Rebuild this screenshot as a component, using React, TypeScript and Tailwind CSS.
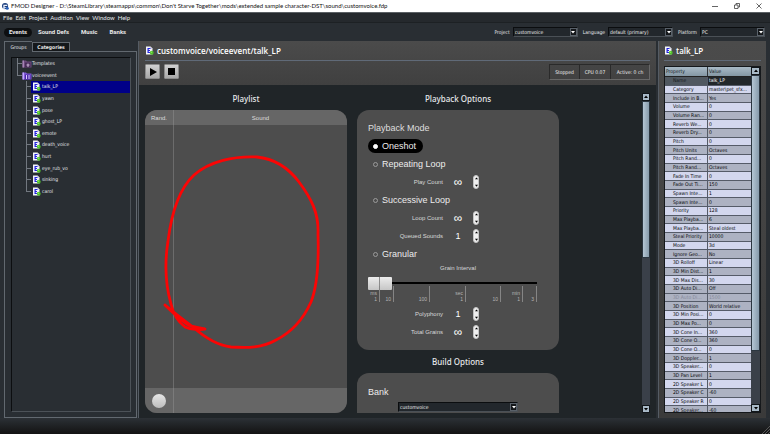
import React, { useState } from 'react';
import clsx from 'clsx';

const MENUS = ['File', 'Edit', 'Project', 'Audition', 'View', 'Window', 'Help'];

const EVENTS = ['talk_LP', 'yawn', 'pose', 'ghost_LP', 'emote', 'death_voice', 'hurt', 'eye_rub_vo', 'sinking', 'carol'];

const PROPERTIES: [string, string][] = [
  ['Name', 'talk_LP'],
  ['Category', 'master\\pet_sfx...'],
  ['Include in B...', 'Yes'],
  ['Volume', '0'],
  ['Volume Ran...', '0'],
  ['Reverb We...', '0'],
  ['Reverb Dry...', '0'],
  ['Pitch', '0'],
  ['Pitch Units', 'Octaves'],
  ['Pitch Rand...', '0'],
  ['Pitch Rand...', 'Octaves'],
  ['Fade In Time', '0'],
  ['Fade Out Ti...', '150'],
  ['Spawn Inte...', '1'],
  ['Spawn Inte...', '0'],
  ['Priority', '128'],
  ['Max Playba...', '6'],
  ['Max Playba...', 'Steal oldest'],
  ['Steal Priority', '10000'],
  ['Mode', '3d'],
  ['Ignore Geo...', 'No'],
  ['3D Rolloff', 'Linear'],
  ['3D Min Dist...', '1'],
  ['3D Max Dis...', '30'],
  ['3D Auto Di...', 'Off'],
  ['3D Auto Di...', '1500'],
  ['3D Position', 'World relative'],
  ['3D Min Posi...', '0'],
  ['3D Max Po...', '0'],
  ['3D Cone In...', '360'],
  ['3D Cone O...', '360'],
  ['3D Cone O...', '0'],
  ['3D Doppler...', '1'],
  ['3D Speaker...', '0'],
  ['3D Pan Level', '1'],
  ['2D Speaker L', '0'],
  ['2D Speaker C', '-60'],
  ['2D Speaker R', '0'],
  ['2D Speaker...', '-60'],
];

const DISABLED_ROW = 25;

const TICKS = [
  { unit: 'ms', label: '1', width: 'w-[12px]' },
  { unit: '', label: '10', width: 'w-[14px]' },
  { unit: '', label: '100', width: 'w-[36px]' },
  { unit: 'sec', label: '1', width: 'w-[36px]' },
  { unit: '', label: '10', width: 'w-[35px]' },
  { unit: 'min', label: '1', width: 'w-[22px]' },
  { unit: '', label: '3', width: 'w-[14px]' },
];

const EventIcon: React.FC = () => (
  <svg viewBox="0 0 18 18" className="h-[9px] w-[9px] shrink-0" aria-hidden="true">
    <path d="M2 1h9l4 4v12H2z" fill="#f4f5fb" />
    <path d="M11 1v4h4z" fill="#b9bccd" />
    <path d="M5 4h6v2H7.400v2H10v2H7.400v2H11v2H5z" fill="#2222e0" />
    <circle cx="13.500" cy="13.500" r="3.800" fill="#4fc02a" />
    <circle cx="12.800" cy="12.600" r="1.600" fill="#8be85c" />
  </svg>
);

const FolderIcon: React.FC<{ open?: boolean }> = ({ open }) => (
  <svg viewBox="0 0 20 18" className="h-[9px] w-[10px] shrink-0" aria-hidden="true">
    <path d="M1 3h7l2 2h9v12H1z" fill={open ? '#8058d8' : '#6d4a7c'} />
    <path d="M1 3h3v14H1z" fill={open ? '#c3a8ff' : '#a583b4'} />
    <path d="M6 7h11v10H6z" fill={open ? '#4b27a8' : '#482c58'} />
    {open ? (
      <path d="M8 8h2v8H8zM12 8h1v8h-1zM15 8h1v8h-1z" fill="#d8c8ff" />
    ) : (
      <path d="M11 9h2v2h2v2h-2v3h-2v-3H9v-2h2z" fill="#c9b2d4" />
    )}
  </svg>
);

const Arrow: React.FC<{ up?: boolean; small?: boolean }> = ({ up, small }) => (
  <svg viewBox="0 0 8 8" className={small ? 'h-[3px] w-[3px]' : 'h-[4px] w-[4px]'} aria-hidden="true">
    <path d={up ? 'M0 6h8L4 1z' : 'M0 2h8L4 7z'} fill="currentColor" />
  </svg>
);

const Dropdown: React.FC<{ label: string; value: string; hideLabel?: boolean; className?: string }> = ({
  label,
  value,
  hideLabel,
  className,
}) => (
  <label className="flex items-center gap-[3px]">
    {!hideLabel && <span>{label}</span>}
    <span className={clsx('relative flex h-[10px] border border-[#0b0d0f] border-r-[#4a5056] border-b-[#4a5056] bg-[#22272c]', className)}>
      <select aria-label={label} className="w-full appearance-none bg-transparent pl-px text-[5px] leading-[8px] text-[#f0f0f0] outline-none">
        <option>{value}</option>
      </select>
      <span className="pointer-events-none absolute top-0 right-0 flex h-[8px] w-[7px] items-center justify-center border border-[#59616a] bg-[#14171a] text-white">
        <Arrow />
      </span>
    </span>
  </label>
);

const ScrollBar: React.FC<{ className: string; thumb: string }> = ({ className, thumb }) => (
  <div className={clsx('flex shrink-0 flex-col bg-[#3a4049]', className)}>
    <button aria-label="Scroll up" className="flex h-[8px] shrink-0 items-center justify-center border border-[#12161a] bg-[#a9bac8] text-black">
      <Arrow up />
    </button>
    <div className={clsx('border border-[#2b3640] bg-linear-to-r from-[#b4c6d4] to-[#879bab]', thumb)} />
    <button aria-label="Scroll down" className="mt-auto flex h-[8px] shrink-0 items-center justify-center border border-[#12161a] bg-[#a9bac8] text-black">
      <Arrow />
    </button>
  </div>
);

const TitleBar: React.FC = () => (
  <header className="flex h-[12px] shrink-0 items-center bg-white pr-2 pl-[2px] text-[#111]">
    <svg viewBox="0 0 16 16" className="mr-[2px] h-[7px] w-[7px]" aria-hidden="true">
      <circle cx="7" cy="7" r="7" fill="#1c3f7c" />
      <path d="M3 4h9v3H6v2h5v2H6v4H3z" fill="#e8eefc" />
      <circle cx="12" cy="12" r="3.500" fill="#2760b8" />
    </svg>
    <h1 className="font-['Lato','Noto_Sans',sans-serif] text-[6px] leading-none whitespace-nowrap">
      FMOD Designer - D:\SteamLibrary\steamapps\common\Don't Starve Together\mods\extended sample character-DST\sound\customvoice.fdp
    </h1>
    <div className="ml-auto flex items-center gap-4">
      <button aria-label="Minimize">
        <svg viewBox="0 0 12 12" className="h-[6px] w-[6px]" fill="none" stroke="#333" strokeWidth="1.500">
          <path d="M0 7h12" />
        </svg>
      </button>
      <button aria-label="Restore">
        <svg viewBox="0 0 12 12" className="h-[6px] w-[6px]" fill="none" stroke="#333" strokeWidth="1.500">
          <path d="M1 4h7v7H1zM4 4V1h7v7H8" />
        </svg>
      </button>
      <button aria-label="Close">
        <svg viewBox="0 0 12 12" className="h-[6px] w-[6px]" fill="none" stroke="#333" strokeWidth="1.500">
          <path d="M1 1l10 10M11 1L1 11" />
        </svg>
      </button>
    </div>
  </header>
);

// Connector lines in front of a tree item
const Branch: React.FC<{ last?: boolean }> = ({ last }) => (
  <span className="flex w-[5px] shrink-0 flex-col self-stretch">
    <span className="flex-1 border-b border-l border-[#727880]" />
    <span className={clsx('flex-1', !last && 'border-l border-[#727880]')} />
  </span>
);

const GroupTree: React.FC<{ selected: string; onSelect: (name: string) => void }> = ({ selected, onSelect }) => (
  <ul className="grid h-[139px] auto-rows-fr leading-none text-[#e4e6ea]">
    <li className="flex items-center pl-[5px]">
      <Branch />
      <FolderIcon />
      <span>Templates</span>
    </li>
    <li className="flex items-center pl-[5px]">
      <Branch last />
      <FolderIcon open />
      <span>voiceevent</span>
    </li>
    {EVENTS.map((name, i) => (
      <li key={name} className="flex items-center pl-[14px]">
        <Branch last={i === EVENTS.length - 1} />
        <button
          onClick={() => onSelect(name)}
          className={clsx('flex flex-1 items-center gap-px self-stretch pl-px', name === selected && 'bg-[#000088]')}
        >
          <EventIcon />
          <span>{name}</span>
        </button>
      </li>
    ))}
  </ul>
);

const Sidebar: React.FC = () => {
  const [selected, setSelected] = useState('talk_LP');

  return (
    <aside className="mr-px flex w-[133px] shrink-0 flex-col">
      <div className="flex items-end leading-none">
        <button className="h-[11px] w-[28px] border-t border-l border-[#626970] text-[#e4e6ea]">Groups</button>
        <button className="h-[10px] w-[38px] border border-[#626970] bg-[#15181b] font-bold text-[#e4e4e4]">Categories</button>
        <span className="flex-1 border-b border-[#626970]" />
      </div>
      <div className="flex min-h-0 flex-1 border-r border-b border-l border-[#626970] pt-[5px] pr-[5px] pb-[5px] pl-[6px]">
        <div className="flex-1 overflow-hidden border border-[#0c0e10] border-r-[#4c5258] border-b-[#4c5258]">
          <GroupTree selected={selected} onSelect={setSelected} />
        </div>
      </div>
    </aside>
  );
};

const PanelTitle: React.FC<{ children: React.ReactNode }> = ({ children }) => (
  <h2 className="flex h-[20px] items-center gap-[3px] border-b border-[#606a78] font-['Open_Sans','Noto_Sans',sans-serif] text-[8px] font-semibold text-white">
    <EventIcon />
    {children}
  </h2>
);

const Playlist: React.FC = () => (
  <section className="flex w-[202px] shrink-0 flex-col">
    <h3 className="flex h-[25px] items-center justify-center pt-[2px] font-['Noto_Sans',sans-serif] text-[8px] font-medium text-[#e6e8ea]">Playlist</h3>
    <div className="relative flex flex-1 flex-col overflow-hidden rounded-[12px] bg-[#4d4d4d] font-['Liberation_Sans',Arial,sans-serif] text-[6px] text-[#dcdcdc]">
      <div className="flex h-[15px] bg-[#666]">
        <span className="flex w-[29px] items-center justify-center border-r border-[#7b7b7b]">Rand.</span>
        <span className="flex flex-1 items-center justify-center">Sound</span>
      </div>
      <div className="w-[29px] flex-1 border-r border-[#6c6c6c]" />
      <div className="flex h-[25px] bg-[#666]">
        <span className="flex w-[29px] items-center justify-center border-r border-[#7b7b7b]">
          <button aria-label="Play mode" className="h-[14px] w-[14px] rounded-full bg-linear-to-b from-[#e6e6e6] to-[#bdbdbd]" />
        </span>
      </div>
      <svg viewBox="0 0 202 303" className="pointer-events-none absolute inset-0 h-full w-full" fill="none" stroke="#fb0505" strokeWidth="2.800" strokeLinecap="round" strokeLinejoin="round">
        <path d="M20 195C26 201 34 209 42 214C48 218 54 217 60 219C54 220 46 220 40 217C32 211 28 203 26 194C20 173 20 150 23 131C27 99 36 77 49 65C65 51 89 46 112 47C132 49 145 60 154 72C166 88 174 103 173 124C174 156 172 177 166 192C157 212 143 224 131 230C117 238 103 238 86 237C70 235 58 226 48 217C40 211 32 205 20 195" />
      </svg>
    </div>
  </section>
);

type Mode = 'Oneshot' | 'Repeating Loop' | 'Successive Loop' | 'Granular';

const ModeOption: React.FC<{ mode: Mode; current: Mode; onChange: (mode: Mode) => void }> = ({ mode, current, onChange }) => (
  <div className="flex h-[18px] items-center">
    <label className={clsx('flex h-[14px] items-center gap-1 rounded-full pr-[7px] pl-[5px] text-[9px] leading-none text-[#ececec]', mode === current && 'bg-black')}>
      <input
        type="radio"
        name="playback-mode"
        checked={mode === current}
        onChange={() => onChange(mode)}
        className="h-[5px] w-[5px] appearance-none rounded-full border border-[#9a9a9a] checked:border-white checked:bg-white"
      />
      {mode}
    </label>
  </div>
);

const CountRow: React.FC<{ label: string; value: string }> = ({ label, value }) => (
  <div className="flex h-[18px] items-center">
    <span className="w-[75px] text-right text-[6px] text-[#d8d8d8]">{label}</span>
    <output className={clsx('w-[30px] text-center leading-none text-white', value === '1' ? 'text-[9px]' : 'text-[12px]')}>{value}</output>
    <span className="flex h-[14px] w-[6px] flex-col items-center justify-between rounded-full border border-[#c4c4c4] bg-[#efefef] py-px text-black">
      <button aria-label={`Increase ${label}`} className="flex"><Arrow up small /></button>
      <button aria-label={`Decrease ${label}`} className="flex"><Arrow small /></button>
    </span>
  </div>
);

const PlaybackOptions: React.FC = () => {
  const [mode, setMode] = useState<Mode>('Oneshot');

  return (
    <section>
      <h3 className="flex h-[25px] items-center justify-center pt-[2px] font-['Noto_Sans',sans-serif] text-[8px] font-medium text-[#e6e8ea]">Playback Options</h3>
      <div className="rounded-[12px] bg-[#4d4d4d] px-[11px] pt-[10px] pb-[9px] font-['Liberation_Sans',Arial,sans-serif]">
        <h4 className="flex h-[17px] items-center text-[9px] text-[#dedede]">Playback Mode</h4>
        <ModeOption mode="Oneshot" current={mode} onChange={setMode} />
        <ModeOption mode="Repeating Loop" current={mode} onChange={setMode} />
        <CountRow label="Play Count" value="∞" />
        <ModeOption mode="Successive Loop" current={mode} onChange={setMode} />
        <CountRow label="Loop Count" value="∞" />
        <CountRow label="Queued Sounds" value="1" />
        <ModeOption mode="Granular" current={mode} onChange={setMode} />
        <label className="block">
          <span className="block h-[13px] text-center text-[6px] leading-[10px] text-[#d8d8d8]">Grain Interval</span>
          <input
            type="range"
            defaultValue={0}
            className="block h-[13px] w-[169px] appearance-none bg-transparent [&::-webkit-slider-runnable-track]:h-[2px] [&::-webkit-slider-runnable-track]:bg-black [&::-webkit-slider-thumb]:-mt-[5px] [&::-webkit-slider-thumb]:h-[13px] [&::-webkit-slider-thumb]:w-[24px] [&::-webkit-slider-thumb]:appearance-none [&::-webkit-slider-thumb]:rounded-[1px] [&::-webkit-slider-thumb]:bg-[linear-gradient(90deg,transparent_11px,#8c8c8c_11px,#8c8c8c_12px,transparent_12px),linear-gradient(#ececec,#c6c6c6)]"
          />
        </label>
        <div className="-mt-[3px] mb-[3px] flex h-[16px] text-[5px] leading-[6px] text-[#b4b4b4]">
          {TICKS.map((tick, i) => (
            <span key={i} className={clsx('flex flex-col items-end justify-end border-r border-[#858585] pr-[2px]', tick.width)}>
              <span>{tick.unit}</span>
              <span>{tick.label}</span>
            </span>
          ))}
        </div>
        <CountRow label="Polyphony" value="1" />
        <CountRow label="Total Grains" value="∞" />
      </div>
    </section>
  );
};

const BuildOptions: React.FC = () => (
  <section>
    <h3 className="flex h-[23px] items-center justify-center font-['Noto_Sans',sans-serif] text-[8px] font-medium text-[#e6e8ea]">Build Options</h3>
    <div className="h-[80px] rounded-[12px] bg-[#4d4d4d] px-[11px] pt-[10px]">
      <h4 className="flex h-[18px] items-center font-['Liberation_Sans',Arial,sans-serif] text-[9px] text-[#ececec]">Bank</h4>
      <div className="mt-px pl-[30px]">
        <Dropdown label="Bank" hideLabel value="customvoice" className="w-[120px]" />
      </div>
    </div>
  </section>
);

const EventEditor: React.FC = () => (
  <main className="flex min-w-0 flex-1 flex-col border-l border-[#555c64] bg-[#202528]">
    <div className="h-[44px] shrink-0 bg-linear-to-b from-[#4b4b4b] to-[#404040] px-[6px]">
      <PanelTitle>customvoice/voiceevent/talk_LP</PanelTitle>
      <div className="flex items-start gap-1 pt-[3px]">
        <button aria-label="Play" className="flex h-[15px] w-[15px] items-center justify-center rounded-[1px] border border-[#8b8b8b] bg-linear-to-b from-[#d0d0d0] to-[#a8a8a8]">
          <svg viewBox="0 0 8 8" className="h-[8px] w-[8px]"><path d="M1 0l7 4-7 4z" /></svg>
        </button>
        <button aria-label="Stop" className="flex h-[15px] w-[15px] items-center justify-center rounded-[1px] border border-[#8b8b8b] bg-linear-to-b from-[#d0d0d0] to-[#a8a8a8]">
          <span className="h-[7px] w-[7px] bg-black" />
        </button>
        <div className="ml-auto flex h-[16px] divide-x divide-[#2a2a2a] border border-[#2a2a2a] border-r-[#686868] border-b-[#686868] text-[#f0f0f0]">
          <span className="flex w-[30px] items-center justify-center">Stopped</span>
          <span className="flex w-[31px] items-center justify-center">CPU 0.07</span>
          <span className="flex w-[38px] items-center justify-center">Active: 0 ch</span>
        </div>
      </div>
    </div>
    <div className="flex min-h-0 flex-1 gap-[10px] overflow-hidden px-[6px] pb-[5px]">
      <Playlist />
      <div className="w-[202px] shrink-0 overflow-hidden">
        <PlaybackOptions />
        <BuildOptions />
      </div>
      <div className="ml-auto flex pt-2">
        <ScrollBar className="w-[8px]" thumb="h-[157px]" />
      </div>
    </div>
  </main>
);

const PropertyPanel: React.FC = () => (
  <aside className="ml-[2px] flex w-[108px] shrink-0 flex-col border-l border-[#555c64] bg-linear-to-b from-[#4b4b4b] to-[#3a3a3a] px-[5px] pb-[5px]">
    <PanelTitle>talk_LP</PanelTitle>
    <div className="mt-[5px] flex min-h-0 flex-1 overflow-hidden border border-[#15181b] leading-none">
      <table className="flex min-w-0 flex-1 flex-col text-left">
        <thead className="h-[10px] shrink-0">
          <tr className="flex h-full border-b border-[#222] bg-linear-to-b from-[#a9bac6] to-[#8497a4] text-[#14181b]">
            <th className="flex w-1/2 items-center border-r border-[#30363b] pl-px font-normal">Property</th>
            <th className="flex items-center pl-px font-normal">Value</th>
          </tr>
        </thead>
        <tbody className="grid h-[338px] shrink-0 auto-rows-fr">
          {PROPERTIES.map(([name, value], i) => (
            <tr
              key={i}
              className={clsx(
                'flex border-b border-[#555b68] whitespace-nowrap',
                i === 0 ? 'bg-[#505860] text-[#16191c]' : i % 2 === 1 && i !== DISABLED_ROW ? 'bg-[#d3d7ee]' : 'bg-[#adb2c2]',
                i === DISABLED_ROW && 'text-[#85899a]',
                i !== 0 && i !== DISABLED_ROW && 'text-[#050608]'
              )}
            >
              <td className="flex w-1/2 items-center border-r border-[#555b68] pl-[8px]">{name}</td>
              <td className={clsx('flex w-1/2 items-center pl-px', i === 0 && 'bg-[#22272b] text-white')}>{value}</td>
            </tr>
          ))}
        </tbody>
      </table>
      <ScrollBar className="w-[9px]" thumb="h-[276px]" />
    </div>
  </aside>
);

export default function App() {
  return (
    <div className="flex h-screen flex-col overflow-hidden bg-[#292e33] font-['DejaVu_Sans_Condensed','Noto_Sans',sans-serif] text-[5px] leading-none text-[#e6e8ea]">
      <TitleBar />
      <nav className="flex h-[10px] shrink-0 items-center gap-[3px] border-t border-[#5b6064] bg-[#25292d] pl-[3px] font-['Lato','Noto_Sans',sans-serif] text-[6px]">
        {MENUS.map((menu) => (
          <button key={menu}>{menu}</button>
        ))}
      </nav>
      <div className="flex h-[19px] shrink-0 items-center border-t border-[#1d2124] pr-[5px] pl-1">
        <nav className="flex items-center gap-[12px] font-['Roboto','Noto_Sans',sans-serif] text-[6px] font-bold text-[#e8e8e8]">
          <button className="-mr-[6px] h-[9px] rounded-full bg-[#0d0f11] px-[5px]">Events</button>
          <button>Sound Defs</button>
          <button>Music</button>
          <button>Banks</button>
        </nav>
        <div className="ml-auto flex gap-[5px]">
          <Dropdown label="Project" value="customvoice" className="w-[65px]" />
          <Dropdown label="Language" value="default (primary)" className="w-[65px]" />
          <Dropdown label="Platform" value="PC" className="w-[65px]" />
        </div>
      </div>
      <div className="flex min-h-0 flex-1 pr-[4px] pl-1">
        <Sidebar />
        <EventEditor />
        <PropertyPanel />
      </div>
      <footer className="flex h-4 shrink-0 items-end justify-end bg-linear-to-b from-[#2c3136] to-[#131313]">
        <svg viewBox="0 0 8 8" className="h-[8px] w-[8px]" stroke="#565656" strokeWidth="1" aria-hidden="true">
          <path d="M0 8l8-8M3 8l5-5M6 8l2-2" />
        </svg>
      </footer>
    </div>
  );
}
